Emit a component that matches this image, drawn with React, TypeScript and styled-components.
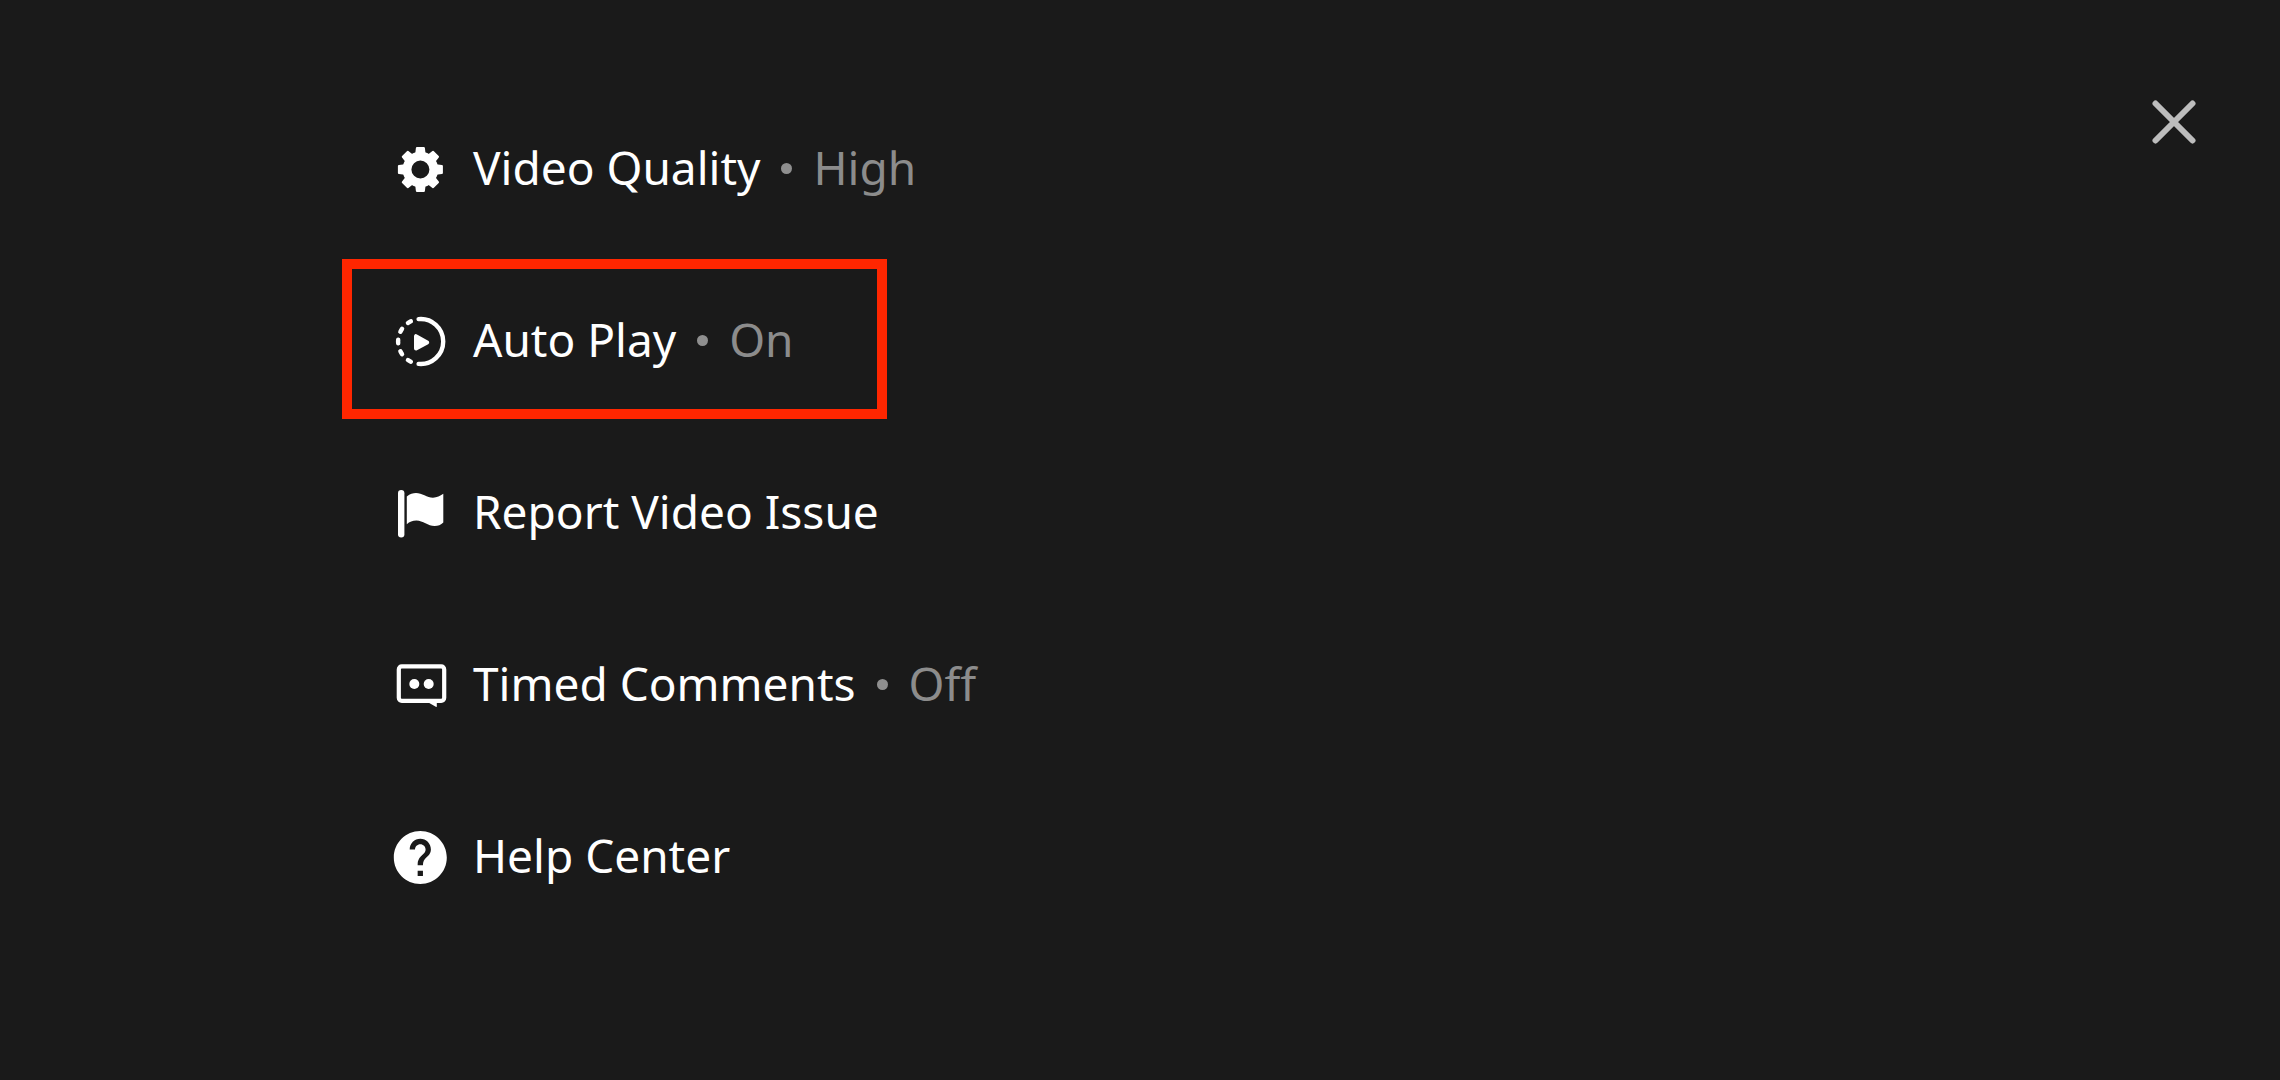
import React from "react";
import styled, { createGlobalStyle } from "styled-components";

const GlobalStyle = createGlobalStyle`
  *, *::before, *::after {
    box-sizing: border-box;
  }
  body {
    margin: 0;
    background: #1a1a1a;
    font-family: "Noto Sans", "Open Sans", sans-serif;
  }
`;

const Page = styled.main`
  display: flex;
  align-items: flex-start;
  justify-content: space-between;
  min-height: 100vh;
  padding: 87px 71px 40px 15%;
  background: #1a1a1a;
`;

const Menu = styled.ul`
  display: flex;
  flex-direction: column;
  gap: 12px;
  margin: 0;
  padding: 0;
  list-style: none;
`;

const MenuButton = styled.button<{ $highlighted: boolean }>`
  display: flex;
  align-items: center;
  height: 160px;
  padding: 0 83px 0 40px;
  border: 10px solid ${(p) => (p.$highlighted ? "#ff2600" : "transparent")};
  background: none;
  color: #ffffff;
  font: inherit;
  font-size: 46px;
  line-height: 64px;
  white-space: nowrap;
  cursor: pointer;
`;

const Icon = styled.svg`
  flex: none;
  width: 56px;
  height: 62px;
  margin-right: 25px;
  fill: #ffffff;
`;

const Dot = styled.span`
  flex: none;
  width: 11px;
  height: 11px;
  margin: 3px 21px 0;
  border-radius: 50%;
  background: #8f8f8f;
`;

const Value = styled.span`
  color: #8c8c8c;
`;

const CloseButton = styled.button`
  display: flex;
  align-items: center;
  justify-content: center;
  width: 70px;
  height: 70px;
  padding: 0;
  border: 0;
  background: none;
  cursor: pointer;
`;

const CloseIcon = styled.svg`
  width: 44px;
  height: 44px;
  fill: none;
  stroke: #bdbdbd;
  stroke-width: 6;
  stroke-linecap: round;
`;

const gearTeeth = [0, 45, 90, 135, 180, 225, 270, 315];
const ringDashes = [-30, -60, -90, -120, -150];

const Gear = (
  <>
    <circle cx="28.4" cy="27.5" r="13.4" fill="none" stroke="#ffffff" strokeWidth="8.8" />
    {gearTeeth.map((angle) => (
      <path
        key={angle}
        transform={`rotate(${angle} 28.4 27.5)`}
        d="M25 5h6.8q1 0 1.1 1l.7 6h-10.4l.7-6q.1-1 1.1-1z"
      />
    ))}
  </>
);

const AutoPlay = (
  <>
    <g fill="none" stroke="#ffffff" strokeWidth="4.4" strokeLinecap="round">
      <path d="M26.6 5.1A22.5 22.5 0 1 1 26.6 49.9" />
      {ringDashes.map((angle) => (
        <path key={angle} transform={`rotate(${angle} 28.6 27.5)`} d="M26.9 5.1Q28.6 4.9 30.3 5.1" />
      ))}
    </g>
    <path
      d="M24 22.2v12.4l11.2-6.2z"
      stroke="#ffffff"
      strokeWidth="4"
      strokeLinejoin="round"
    />
  </>
);

const Flag = (
  <>
    <rect x="6" y="4" width="6.4" height="47.4" rx="3.2" />
    <path d="M14.8 10.4C18 7.6 21 7 24 7C30 7 35 11.7 41 11.7C45 11.7 48 10 51.3 7.8V36.4C49 38.6 46 40 42.6 40C36 40 31 34.4 24.5 34.4C20.5 34.4 17.5 35.6 14.8 38.2z" />
  </>
);

const Comment = (
  <>
    <rect x="6.8" y="8.4" width="45.4" height="34.4" rx="3" fill="none" stroke="#ffffff" strokeWidth="4.2" />
    <circle cx="22.3" cy="26" r="5" />
    <circle cx="36.7" cy="26" r="5" />
    <path d="M34.6 43.6h10.2v4.6q0 1.2-1 .6z" />
  </>
);

const Help = (
  <path
    transform="translate(-3.5 -4.4) scale(2.65)"
    d="M12 2C6.48 2 2 6.48 2 12s4.48 10 10 10 10-4.48 10-10S17.52 2 12 2zm1 17h-2v-2h2v2zm2.07-7.75l-.9.92C13.45 12.9 13 13.5 13 15h-2v-.5c0-1.1.45-2.1 1.17-2.83l1.24-1.26c.37-.36.59-.86.59-1.41 0-1.1-.9-2-2-2s-2 .9-2 2H8c0-2.21 1.79-4 4-4s4 1.79 4 4c0 .88-.36 1.68-.93 2.25z"
  />
);

interface MenuItem {
  label: string;
  value?: string;
  icon: React.ReactNode;
  highlighted?: boolean;
}

const items: MenuItem[] = [
  { label: "Video Quality", value: "High", icon: Gear },
  { label: "Auto Play", value: "On", icon: AutoPlay, highlighted: true },
  { label: "Report Video Issue", icon: Flag },
  { label: "Timed Comments", value: "Off", icon: Comment },
  { label: "Help Center", icon: Help },
];

export default function App() {
  return (
    <>
      <GlobalStyle />
      <Page>
        <Menu>
          {items.map((item) => (
            <li key={item.label}>
              <MenuButton type="button" $highlighted={Boolean(item.highlighted)}>
                <Icon viewBox="0 -6 56 62" aria-hidden="true">
                  {item.icon}
                </Icon>
                <span>{item.label}</span>
                {item.value && (
                  <>
                    <Dot />
                    <Value>{item.value}</Value>
                  </>
                )}
              </MenuButton>
            </li>
          ))}
        </Menu>
        <CloseButton type="button" aria-label="Close">
          <CloseIcon viewBox="0 0 44 44" aria-hidden="true">
            <path d="M3.5 3.5L40.5 40.5M40.5 3.5L3.5 40.5" />
          </CloseIcon>
        </CloseButton>
      </Page>
    </>
  );
}
